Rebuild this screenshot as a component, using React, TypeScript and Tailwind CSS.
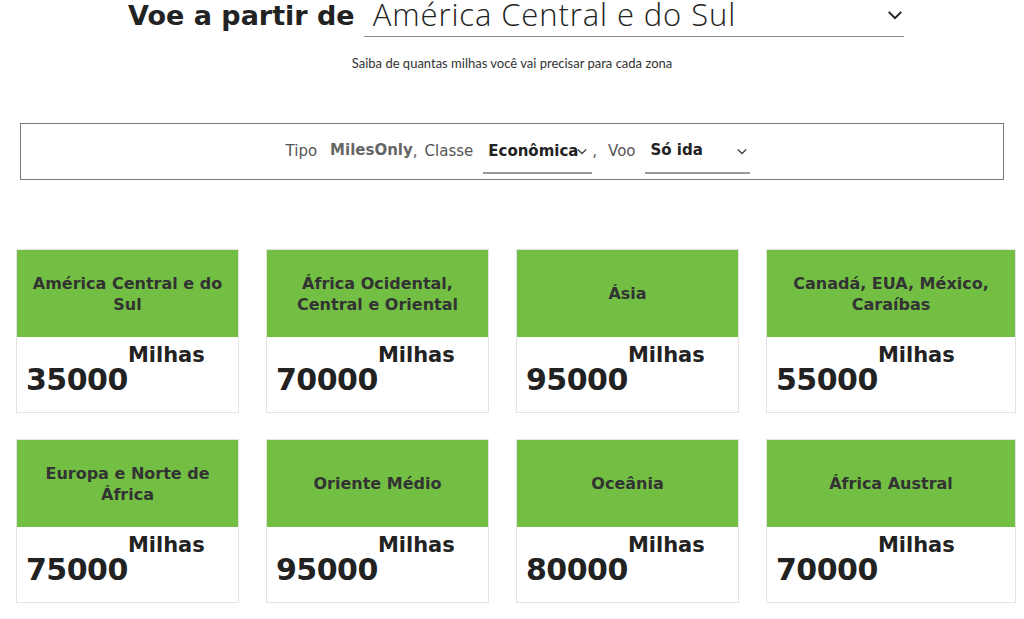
import React from "react";

const cards = [
  { name: "América Central e do Sul", miles: "35000" },
  { name: "África Ocidental, Central e Oriental", miles: "70000" },
  { name: "Ásia", miles: "95000" },
  { name: "Canadá, EUA, México, Caraíbas", miles: "55000" },
  { name: "Europa e Norte de África", miles: "75000" },
  { name: "Oriente Médio", miles: "95000" },
  { name: "Oceânia", miles: "80000" },
  { name: "África Austral", miles: "70000" },
];

const Chevron = ({ className }: { className?: string }) => (
  <svg className={className} viewBox="0 0 12 8" fill="none" stroke="currentColor" strokeWidth="1.6">
    <path d="M1 1.5 L6 6.5 L11 1.5" />
  </svg>
);

export default function App() {
  const mont = { fontFamily: '"DejaVu Sans", sans-serif' };
  return (
    <div className="w-[1024px] h-[619px] bg-white overflow-hidden text-[#333]" style={mont}>
      <div className="flex items-end h-[37px] pl-[128px]">
        <div className="text-[27px] font-bold leading-[32px] text-[#222] pb-[5px] whitespace-nowrap">Voe a partir de</div>
        <div className="ml-[9px] w-[540px] shrink-0 h-[37px] border-b border-[#888] flex items-end justify-between">
          <span className="pl-[9px] text-[31px] font-light leading-[31px] tracking-[0.9px] text-[#222] whitespace-nowrap mb-[6px]" style={{ fontFamily: '"Open Sans", sans-serif' }}>América Central e do Sul</span>
          <Chevron className="w-[16px] h-[10px] mr-[1px] mb-[16px] text-[#222] shrink-0" />
        </div>
      </div>
      <div className="text-center text-[13px] mt-[20px] leading-none text-[#333]" style={{ fontFamily: 'Lato, sans-serif' }}>Saiba de quantas milhas você vai precisar para cada zona</div>

      <div className="mx-[20px] mt-[53px] h-[57px] border border-[#777] flex items-center justify-center pl-[12px] text-[15px] text-[#555]">
        <span>Tipo</span>
        <span className="ml-[13px] font-bold text-[#666] -mt-[3px]">MilesOnly</span>
        <span>,</span>
        <span className="ml-[7px]">Classe</span>
        <div className="ml-[10px] w-[109px] border-b-2 border-[#999] flex items-center h-[30px] mt-[14px]">
          <span className="ml-[5px] font-bold text-[#222] -mt-[14px] whitespace-nowrap overflow-hidden w-[90px] leading-[22px]">Econômica</span>
          <Chevron className="w-[10px] h-[7px] -mt-[12px] -ml-[1px] text-[#444]" />
        </div>
        <span>,</span>
        <span className="ml-[11px]">Voo</span>
        <div className="ml-[10px] w-[105px] border-b-2 border-[#999] flex items-center justify-between h-[30px] mt-[14px]">
          <span className="ml-[5px] font-bold text-[#222] -mt-[14px]">Só ida</span>
          <Chevron className="w-[10px] h-[7px] -mt-[12px] mr-[3px] text-[#444]" />
        </div>
      </div>

      <div className="ml-[16px] mt-[69px] grid grid-cols-[223px_223px_223px_250px] gap-x-[27px] gap-y-[26px]">
        {cards.map((c) => (
          <div key={c.name} className="border border-[#e3e3e3] bg-white">
            <div className="bg-[#72bf44] h-[87px] flex items-center justify-center px-[10px] text-center text-[16px] font-bold leading-[21px] text-[#333]">
              {c.name}
            </div>
            <div className="h-[75px] pl-[9px] pt-[8px] flex items-start text-[#222] font-bold">
              <span className="text-[30px] leading-none mt-[20px] tracking-[-0.5px]">{c.miles}</span>
              <span className="text-[21px] leading-none">Milhas</span>
            </div>
          </div>
        ))}
      </div>
    </div>
  );
}
